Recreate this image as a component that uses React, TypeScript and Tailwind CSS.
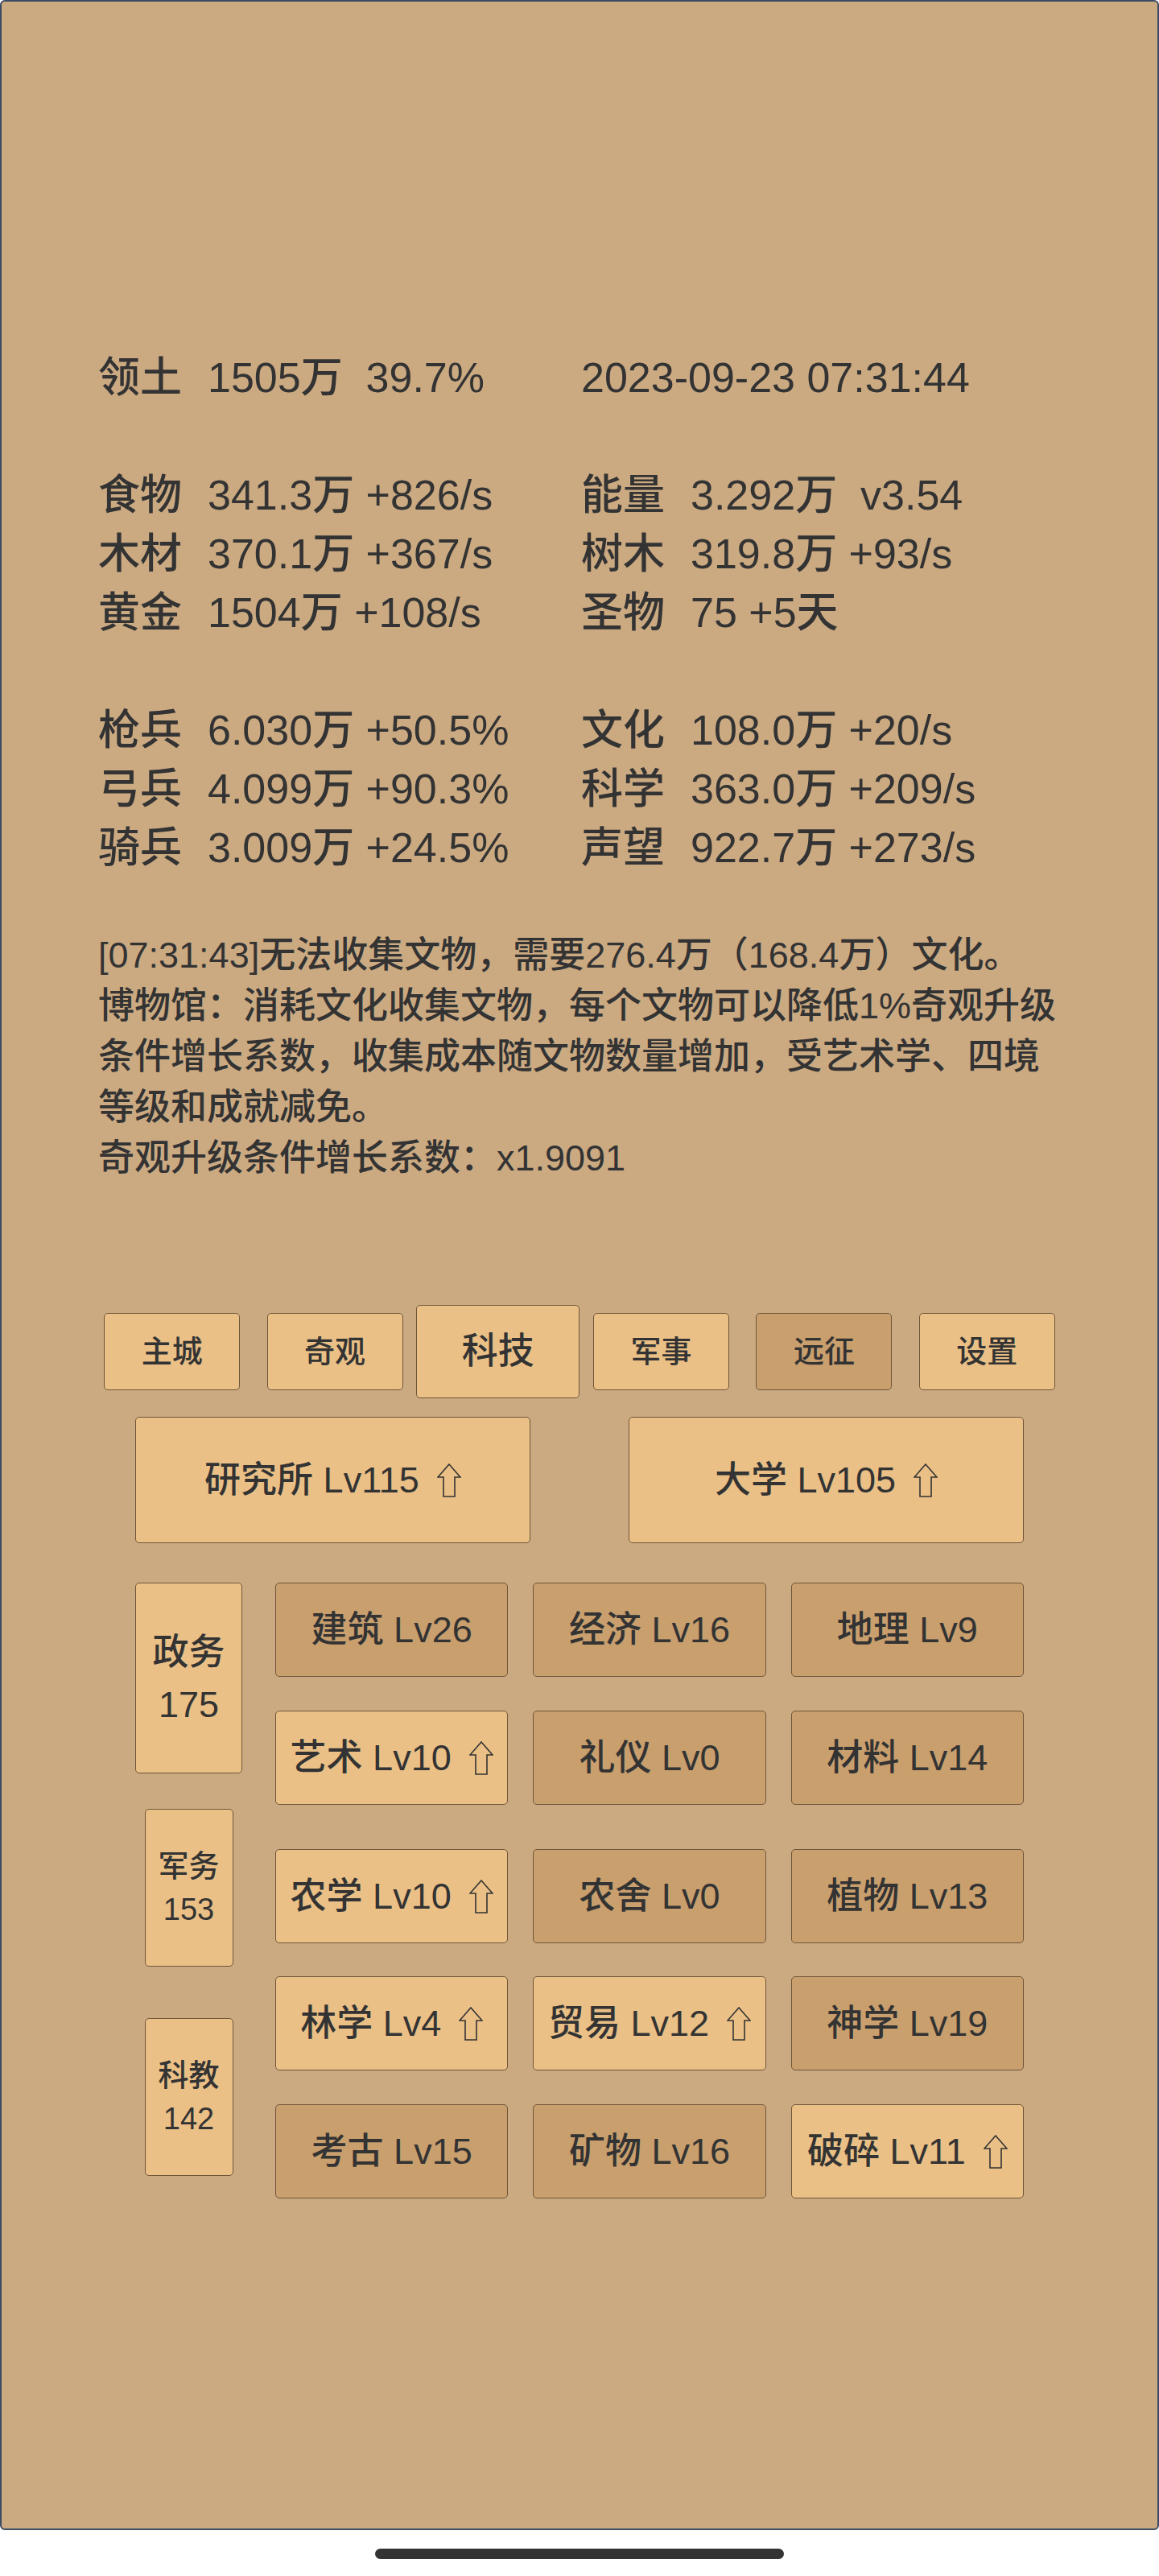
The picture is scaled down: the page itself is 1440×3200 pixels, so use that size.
import React from "react";

const left: ([string, string] | null)[] = [
  ["领土", "1505万  39.7%"],
  null,
  ["食物", "341.3万 +826/s"],
  ["木材", "370.1万 +367/s"],
  ["黄金", "1504万 +108/s"],
  null,
  ["枪兵", "6.030万 +50.5%"],
  ["弓兵", "4.099万 +90.3%"],
  ["骑兵", "3.009万 +24.5%"],
];

const right: ([string, string] | null)[] = [
  ["", "2023-09-23 07:31:44"],
  null,
  ["能量", "3.292万  v3.54"],
  ["树木", "319.8万 +93/s"],
  ["圣物", "75 +5天"],
  null,
  ["文化", "108.0万 +20/s"],
  ["科学", "363.0万 +209/s"],
  ["声望", "922.7万 +273/s"],
];

const tabs = [
  { name: "主城" },
  { name: "奇观" },
  { name: "科技", active: true },
  { name: "军事" },
  { name: "远征", dark: true },
  { name: "设置" },
];

type Tech = { name: string; dark?: boolean; up?: boolean };

const groups: { title: string; count: number; big?: boolean; rows: Tech[][] }[] = [
  {
    title: "政务",
    count: 175,
    big: true,
    rows: [
      [
        { name: "建筑 Lv26", dark: true },
        { name: "经济 Lv16", dark: true },
        { name: "地理 Lv9", dark: true },
      ],
      [
        { name: "艺术 Lv10", up: true },
        { name: "礼仪 Lv0", dark: true },
        { name: "材料 Lv14", dark: true },
      ],
    ],
  },
  {
    title: "军务",
    count: 153,
    rows: [
      [
        { name: "农学 Lv10", up: true },
        { name: "农舍 Lv0", dark: true },
        { name: "植物 Lv13", dark: true },
      ],
    ],
  },
  {
    title: "科教",
    count: 142,
    rows: [
      [
        { name: "林学 Lv4", up: true },
        { name: "贸易 Lv12", up: true },
        { name: "神学 Lv19", dark: true },
      ],
      [
        { name: "考古 Lv15", dark: true },
        { name: "矿物 Lv16", dark: true },
        { name: "破碎 Lv11", up: true },
      ],
    ],
  },
];

function UpArrow() {
  return (
    <svg width="30" height="42" viewBox="0 0 30 42" className="ml-[22px] shrink-0">
      <polygon
        points="15,1 29,17 22,17 22,41 8,41 8,17 1,17"
        fill="none"
        stroke="#333"
        strokeWidth="1.6"
        strokeLinejoin="miter"
      />
    </svg>
  );
}

function StatColumn({ lines }: { lines: ([string, string] | null)[] }) {
  return (
    <div className="flex flex-col">
      {lines.map((line, i) =>
        line ? (
          <div key={i} className="h-[73px] leading-[73px] whitespace-pre">
            {line[0] && <span className="inline-block w-[136px]">{line[0]}</span>}
            <span>{line[1]}</span>
          </div>
        ) : (
          <div key={i} className="h-[73px]" />
        )
      )}
    </div>
  );
}

function TechButton({ t }: { t: Tech }) {
  return (
    <div
      className={`h-[117px] flex items-center justify-center rounded-[5px] border-[1.5px] border-[#6e5638] text-[45px] ${
        t.dark ? "bg-[#c99f6e]" : "bg-[#eac086]"
      }`}
    >
      <span className="whitespace-pre">{t.name}</span>
      {t.up && <UpArrow />}
    </div>
  );
}

export default function App() {
  return (
    <div
      className="w-[1440px] h-[3200px] bg-white text-[#333333] font-medium"
      style={{ fontFamily: '"Liberation Sans", "Noto Sans CJK SC", sans-serif' }}
    >
      <div className="h-[3143px] bg-[#cbaa82] border-2 border-[#3b4b63] rounded-[6px]">
        <div className="pt-[431px] pl-[120px]">
          <div className="grid grid-cols-2 w-[1200px] text-[52px]">
            <StatColumn lines={left} />
            <StatColumn lines={right} />
          </div>
          <p className="mt-[65px] w-[1220px] text-[45px] leading-[63px] whitespace-nowrap">
            [07:31:43]无法收集文物，需要276.4万（168.4万）文化。
            <br />
            博物馆：消耗文化收集文物，每个文物可以降低1%奇观升级
            <br />
            条件增长系数，收集成本随文物数量增加，受艺术学、四境
            <br />
            等级和成就减免。
            <br />
            奇观升级条件增长系数：x1.9091
          </p>
        </div>

        <div className="mt-[151px] mx-auto w-[1215px] h-[116px] flex items-center">
          {tabs.map((tab) => (
            <div key={tab.name} className="flex-1 flex justify-center">
              <div
                className={`flex items-center justify-center rounded-[5px] border-[1.5px] border-[#6e5638] ${
                  tab.active
                    ? "w-[203px] h-[116px] text-[45px]"
                    : "w-[169px] h-[96px] text-[38px]"
                } ${tab.dark ? "bg-[#c99f6e]" : "bg-[#eac086]"}`}
              >
                {tab.name}
              </div>
            </div>
          ))}
        </div>

        <div className="mt-[23px] mx-auto w-[1104px] flex justify-between">
          {["研究所 Lv115", "大学 Lv105"].map((b) => (
            <div
              key={b}
              className="w-[491px] h-[157px] flex items-center justify-center rounded-[5px] border-[1.5px] border-[#6e5638] bg-[#eac086] text-[45px]"
            >
              <span className="whitespace-pre">{b}</span>
              <UpArrow />
            </div>
          ))}
        </div>

        <div className="mt-[49px] mx-auto w-[1104px] flex flex-col">
          {groups.map((g, gi) => (
            <div key={g.title} className="flex items-start">
              <div
                className={`w-[133px] flex justify-center ${
                  gi === 0 ? "" : gi === 1 ? "mt-[5px]" : "mt-[64px]"
                }`}
              >
                <div
                  className={`flex flex-col items-center justify-center rounded-[5px] border-[1.5px] border-[#6e5638] bg-[#eac086] ${
                    g.big
                      ? "w-[133px] h-[237px] text-[45px] leading-[65px]"
                      : "w-[110px] h-[196px] text-[38px] leading-[54px]"
                  }`}
                >
                  <span>{g.title}</span>
                  <span>{g.count}</span>
                </div>
              </div>
              <div
                className={`ml-[41px] flex-1 grid grid-cols-3 gap-x-[31px] gap-y-[42px] ${
                  gi === 0 ? "" : gi === 1 ? "mt-[55px]" : "mt-[12px]"
                }`}
              >
                {g.rows.flat().map((t) => (
                  <TechButton key={t.name} t={t} />
                ))}
              </div>
            </div>
          ))}
        </div>
      </div>
      <div className="mt-[23px] mx-auto w-[508px] h-[13px] rounded-full bg-[#333333]" />
    </div>
  );
}
